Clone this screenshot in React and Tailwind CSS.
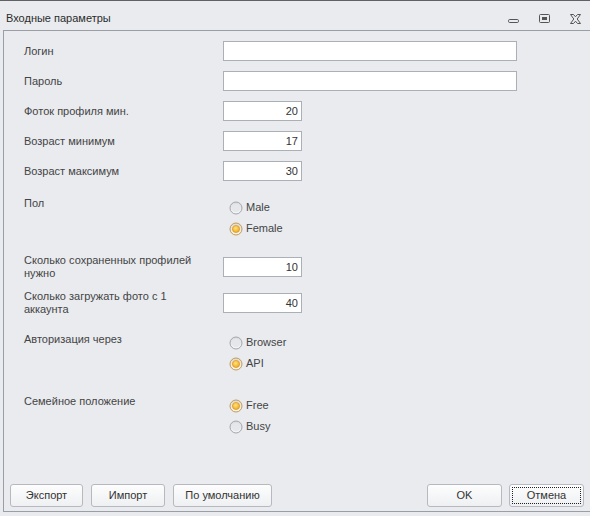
import React, { useState } from "react";

const font = { fontFamily: '"Liberation Sans", Arial, sans-serif' };

const Radio = ({ checked, label, onClick }) => (
  <div className="flex items-center h-[21px] cursor-default" onClick={onClick}>
    <svg width="14" height="14" viewBox="0 0 14 14" className="mr-[3px]">
      <defs>
        <linearGradient id="rg" x1="0" y1="0" x2="0" y2="1">
          <stop offset="0" stopColor="#d9dbdf" />
          <stop offset="1" stopColor="#f7f7f8" />
        </linearGradient>
        <radialGradient id="dot" cx="0.45" cy="0.4" r="0.6">
          <stop offset="0" stopColor="#ffe27a" />
          <stop offset="1" stopColor="#f0a81c" />
        </radialGradient>
      </defs>
      <circle cx="7" cy="7" r="6" fill="url(#rg)" stroke={checked ? "#c79a4a" : "#a3a6ab"} />
      {checked ? (
        <circle cx="7" cy="7" r="3.6" fill="url(#dot)" stroke="#d98d12" strokeWidth="0.6" />
      ) : (
        <circle cx="7" cy="7" r="4" fill="#e6e7ea" />
      )}
    </svg>
    <span>{label}</span>
  </div>
);

const Field = ({ label, value, wide }) => (
  <div className="flex items-center h-[30px]">
    <div className="w-[199px]">{label}</div>
    <input
      readOnly
      value={value}
      className={`h-[20px] border border-[#abafb6] bg-white px-[3px] text-right outline-none text-[#333] ${
        wide ? "w-[294px]" : "w-[79px]"
      }`}
    />
  </div>
);

const Btn = ({ children, w, focus }) => (
  <button
    className={`h-[23px] ${w} rounded-[3px] border border-[#b6b9bf] bg-gradient-to-b from-[#fdfdfd] to-[#eef0f2] p-[2px] text-[#333]`}
  >
    <div
      className={`h-full w-full flex items-center justify-center ${
        focus ? "border border-dotted border-[#222]" : ""
      }`}
    >
      {children}
    </div>
  </button>
);

export default function App() {
  const [sex, setSex] = useState("female");
  const [auth, setAuth] = useState("api");
  const [family, setFamily] = useState("free");

  return (
    <div className="w-[590px] h-[516px] bg-[#e9ebef] text-[11px] text-[#444] border-t border-[#5f6166] flex flex-col" style={font}>
      {/* title bar */}
      <div className="h-[29px] flex items-center pl-[6px] pr-[6px]">
        <span className="text-[11px] text-[#2b2b2b] pt-[6px]">Входные параметры</span>
        <div className="ml-auto flex items-center gap-[18px] pt-[6px] pr-[2px]">
          <svg width="13" height="12" viewBox="0 0 13 12">
            <rect x="1.5" y="6.5" width="10" height="3" rx="1.2" fill="none" stroke="#555" />
          </svg>
          <svg width="13" height="12" viewBox="0 0 13 12">
            <rect x="1.5" y="1.5" width="10" height="8" rx="1" fill="none" stroke="#555" />
            <rect x="4" y="4" width="5" height="3" fill="#555" />
          </svg>
          <svg width="13" height="12" viewBox="0 0 13 12">
            <path
              d="M1.5 1.5h3l2 2.3 2-2.3h3l-3.3 4.5 3.3 4.5h-3l-2-2.3-2 2.3h-3l3.3-4.5z"
              fill="none"
              stroke="#555"
              strokeLinejoin="round"
            />
          </svg>
        </div>
      </div>

      {/* content panel */}
      <div className="ml-[3px] mr-[-4px] h-[482px] border border-[#9a9ea5] pl-[20px] pt-[5px] flex flex-col relative">
        <Field label="Логин" value="" wide />
        <Field label="Пароль" value="" wide />
        <Field label="Фоток профиля мин." value="20" />
        <Field label="Возраст минимум" value="17" />
        <Field label="Возраст максимум" value="30" />

        <div className="flex h-[63px] pt-[9px]">
          <div className="w-[205px]">Пол</div>
          <div className="flex flex-col mt-[2px]">
            <Radio label="Male" checked={sex === "male"} onClick={() => setSex("male")} />
            <Radio label="Female" checked={sex === "female"} onClick={() => setSex("female")} />
          </div>
        </div>

        <div className="flex items-center h-[36px]">
          <div className="w-[199px] leading-[13px] pr-[20px]">Сколько сохраненных профилей нужно</div>
          <input readOnly value="10" className="h-[20px] w-[79px] border border-[#abafb6] bg-white px-[3px] text-right outline-none text-[#333]" />
        </div>
        <div className="flex items-center h-[36px]">
          <div className="w-[199px] leading-[13px] pr-[20px]">Сколько загружать фото с 1 аккаунта</div>
          <input readOnly value="40" className="h-[20px] w-[79px] border border-[#abafb6] bg-white px-[3px] text-right outline-none text-[#333]" />
        </div>

        <div className="flex h-[67px] pt-[10px]">
          <div className="w-[205px]">Авторизация через</div>
          <div className="flex flex-col mt-[1px]">
            <Radio label="Browser" checked={auth === "browser"} onClick={() => setAuth("browser")} />
            <Radio label="API" checked={auth === "api"} onClick={() => setAuth("api")} />
          </div>
        </div>

        <div className="flex pt-[5px]">
          <div className="w-[205px]">Семейное положение</div>
          <div className="flex flex-col mt-[2px]">
            <Radio label="Free" checked={family === "free"} onClick={() => setFamily("free")} />
            <Radio label="Busy" checked={family === "busy"} onClick={() => setFamily("busy")} />
          </div>
        </div>

        <div className="mt-auto mb-[4px] -ml-[14px] mr-[9px] flex items-center">
          <div className="flex gap-[8px]">
            <Btn w="w-[73px]">Экспорт</Btn>
            <Btn w="w-[74px]">Импорт</Btn>
            <Btn w="w-[99px]">По умолчанию</Btn>
          </div>
          <div className="ml-auto flex gap-[7px]">
            <Btn w="w-[75px]">OK</Btn>
            <Btn w="w-[75px]" focus>Отмена</Btn>
          </div>
        </div>
      </div>
    </div>
  );
}
